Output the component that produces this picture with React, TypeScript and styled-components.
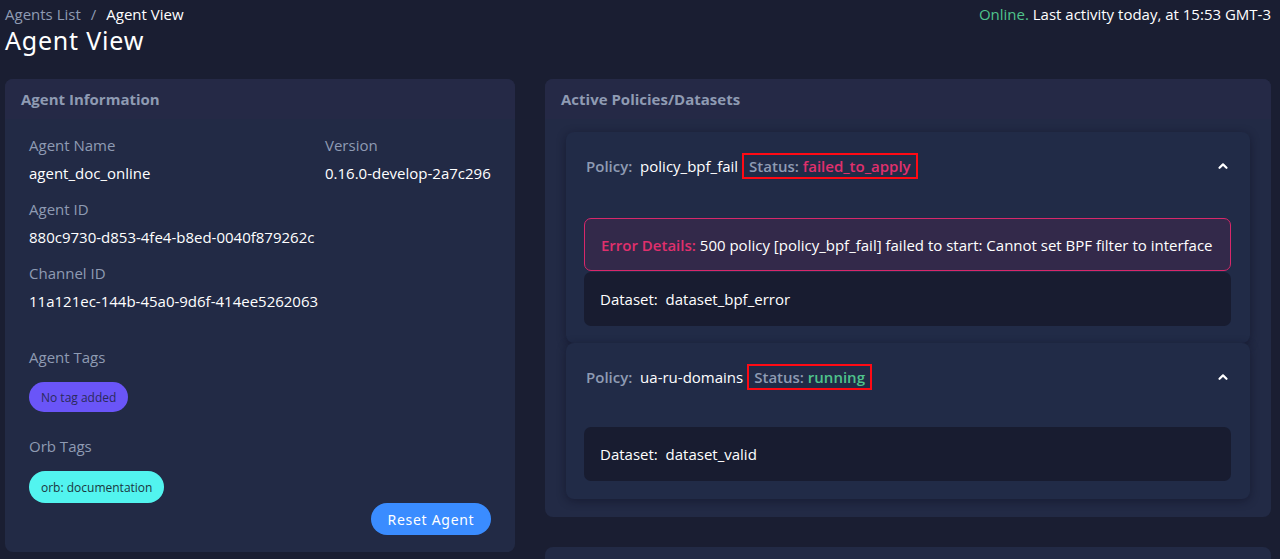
import React from "react";
import styled, { createGlobalStyle } from "styled-components";

const GlobalStyle = createGlobalStyle`
  html, body { margin: 0; padding: 0; background: #1a1e32; }
  body { font-family: "Open Sans", "Noto Sans", sans-serif; color: #ffffff; font-size: 15px; }
  * { box-sizing: border-box; }
`;

const Page = styled.div`
  height: 559px;
  padding: 5px 9px 0 5px;
  background: #1a1e32;
  overflow: hidden;
`;

const TopBar = styled.div`
  display: flex;
  justify-content: space-between;
  align-items: flex-start;
`;

const Crumbs = styled.div`
  display: flex;
  align-items: center;
  gap: 10px;
  font-size: 15px;
  line-height: 18px;
`;

const CrumbLink = styled.span`
  color: #8f9bb3;
`;

const CrumbSep = styled.span`
  color: #8f9bb3;
`;

const CrumbCurrent = styled.span`
  color: #ffffff;
`;

const Title = styled.h1`
  margin: 1px 0 0;
  font-family: "Noto Sans", sans-serif;
  font-weight: 400;
  font-size: 25px;
  line-height: 32px;
  letter-spacing: 0.8px;
  color: #ffffff;
`;

const Activity = styled.div`
  font-size: 15px;
  line-height: 18px;
  color: #ffffff;
`;

const Online = styled.span`
  color: #4fc38c;
`;

const Columns = styled.div`
  display: grid;
  grid-template-columns: 510px 726px;
  column-gap: 30px;
  margin-top: 23px;
  align-items: start;
`;

const Stack = styled.div`
  display: flex;
  flex-direction: column;
  gap: 30px;
`;

const Card = styled.section`
  background: #222a45;
  border-radius: 8px;
  overflow: hidden;
`;

const CardHeader = styled.header`
  height: 40px;
  padding: 0 16px;
  display: flex;
  align-items: center;
  background: #252946;
  color: #8f9bb3;
  font-weight: 700;
  font-size: 15px;
`;

const InfoBody = styled.div`
  padding: 16px 24px 17px;
  display: flex;
  flex-direction: column;
`;

const InfoGrid = styled.div`
  display: grid;
  grid-template-columns: 296px 1fr;
  row-gap: 16px;
`;

const Field = styled.div<{ $wide?: boolean }>`
  display: flex;
  flex-direction: column;
  gap: 8px;
  grid-column: ${(p) => (p.$wide ? "1 / span 2" : "auto")};
`;

const Label = styled.div`
  color: #8f9bb3;
  font-size: 15px;
  line-height: 20px;
`;

const Value = styled.div`
  color: #ffffff;
  font-size: 15px;
  line-height: 20px;
  white-space: nowrap;
`;

const TagSection = styled.div<{ $top: number }>`
  margin-top: ${(p) => p.$top}px;
  display: flex;
  flex-direction: column;
  align-items: flex-start;
  gap: 15px;
`;

const Pill = styled.span<{ $bg: string; $fg: string; $h: number }>`
  display: inline-flex;
  align-items: center;
  height: ${(p) => p.$h}px;
  padding: 0 12px;
  border-radius: 16px;
  background: ${(p) => p.$bg};
  color: ${(p) => p.$fg};
  font-size: 12px;
`;

const Actions = styled.div`
  display: flex;
  justify-content: flex-end;
`;

const Button = styled.button`
  height: 32px;
  width: 120px;
  border: none;
  border-radius: 16px;
  background: #3a8cff;
  color: #ffffff;
  font-family: "Noto Sans", sans-serif;
  font-size: 14px;
  letter-spacing: 0.7px;
  cursor: pointer;
`;

const PoliciesBody = styled.div`
  padding: 13px 21px 18px 21px;
  display: flex;
  flex-direction: column;
`;

const Accordion = styled.div`
  background: #212b47;
  border-radius: 8px;
  box-shadow: 0 2px 10px rgba(10, 12, 28, 0.45);
`;

const AccHeader = styled.div`
  display: flex;
  align-items: center;
  justify-content: space-between;
  padding: 21px 21px 23px 20px;
`;

const PolicyLine = styled.div`
  font-size: 15px;
  line-height: 26px;
  white-space: pre;
`;

const Muted = styled.span`
  color: #8f9bb3;
  font-weight: 600;
`;

const StatusBox = styled.span`
  margin-left: 4px;
  height: 26px;
  display: inline-flex;
  align-items: center;
  vertical-align: top;
  padding: 0 5px;
  border: 2px solid #ff0a14;
`;

const StatusValue = styled.span<{ $tone: "bad" | "good" }>`
  color: ${(p) => (p.$tone === "bad" ? "#e0306d" : "#4fc38c")};
  font-weight: 600;
`;

const Chevron = styled.svg`
  width: 12px;
  height: 12px;
  display: block;
`;

const AccBody = styled.div<{ $top: number; $bottom: number }>`
  padding: ${(p) => p.$top}px 19px ${(p) => p.$bottom}px 18px;
  display: flex;
  flex-direction: column;
  gap: 1px;
`;

const ErrorBox = styled.div`
  height: 53px;
  display: flex;
  align-items: center;
  padding: 0 16px;
  border: 1px solid #d8286a;
  border-radius: 7px;
  background: #33294a;
  color: #ffffff;
  font-size: 15px;
  white-space: nowrap;
`;

const ErrorLabel = styled.span`
  color: #e0306d;
  font-weight: 600;
`;

const DatasetBox = styled.div`
  height: 54px;
  display: flex;
  align-items: center;
  padding: 0 16px;
  border-radius: 7px;
  background: #181c30;
  color: #ffffff;
  font-size: 15px;
  white-space: pre;
`;

const StubCard = styled.section`
  height: 40px;
  background: #222a45;
  border-radius: 8px;
`;

const ChevronUp = () => (
  <Chevron viewBox="0 0 12 12">
    <path d="M2.5 7.8 L6 4.4 L9.5 7.8" fill="none" stroke="#ffffff" strokeWidth="2.2" strokeLinecap="round" strokeLinejoin="round" />
  </Chevron>
);

type PolicyProps = {
  name: string;
  status: string;
  tone: "bad" | "good";
  error?: string;
  dataset: string;
  bodyTop: number;
  bodyBottom: number;
};

const Policy = ({ name, status, tone, error, dataset, bodyTop, bodyBottom }: PolicyProps) => (
  <Accordion>
    <AccHeader>
      <PolicyLine>
        <Muted>Policy:</Muted>
        {`  ${name}`}
        <StatusBox>
          <Muted>Status: </Muted>
          <StatusValue $tone={tone}>{status}</StatusValue>
        </StatusBox>
      </PolicyLine>
      <ChevronUp />
    </AccHeader>
    <AccBody $top={bodyTop} $bottom={bodyBottom}>
      {error && (
        <ErrorBox>
          <ErrorLabel>Error Details:</ErrorLabel>&nbsp;{error}
        </ErrorBox>
      )}
      <DatasetBox>{`Dataset:  ${dataset}`}</DatasetBox>
    </AccBody>
  </Accordion>
);

export default function App() {
  return (
    <>
      <GlobalStyle />
      <Page>
        <TopBar>
          <div>
            <Crumbs>
              <CrumbLink>Agents List</CrumbLink>
              <CrumbSep>/</CrumbSep>
              <CrumbCurrent>Agent View</CrumbCurrent>
            </Crumbs>
            <Title>Agent View</Title>
          </div>
          <Activity>
            <Online>Online.</Online> Last activity today, at 15:53 GMT-3
          </Activity>
        </TopBar>
        <Columns>
          <Card>
            <CardHeader>Agent Information</CardHeader>
            <InfoBody>
              <InfoGrid>
                <Field>
                  <Label>Agent Name</Label>
                  <Value>agent_doc_online</Value>
                </Field>
                <Field>
                  <Label>Version</Label>
                  <Value>0.16.0-develop-2a7c296</Value>
                </Field>
                <Field $wide>
                  <Label>Agent ID</Label>
                  <Value>880c9730-d853-4fe4-b8ed-0040f879262c</Value>
                </Field>
                <Field $wide>
                  <Label>Channel ID</Label>
                  <Value>11a121ec-144b-45a0-9d6f-414ee5262063</Value>
                </Field>
              </InfoGrid>
              <TagSection $top={36}>
                <Label>Agent Tags</Label>
                <Pill $bg="#6a55f8" $fg="#2b2a5c" $h={30}>No tag added</Pill>
              </TagSection>
              <TagSection $top={24}>
                <Label>Orb Tags</Label>
                <Pill $bg="#52f4ef" $fg="#1c3640" $h={32}>orb: documentation</Pill>
              </TagSection>
              <Actions>
                <Button>Reset Agent</Button>
              </Actions>
            </InfoBody>
          </Card>
          <Stack>
            <Card>
              <CardHeader>Active Policies/Datasets</CardHeader>
              <PoliciesBody>
                <Policy
                  name="policy_bpf_fail"
                  status="failed_to_apply"
                  tone="bad"
                  error="500 policy [policy_bpf_fail] failed to start: Cannot set BPF filter to interface"
                  dataset="dataset_bpf_error"
                  bodyTop={16}
                  bodyBottom={17}
                />
                <Policy
                  name="ua-ru-domains"
                  status="running"
                  tone="good"
                  dataset="dataset_valid"
                  bodyTop={14}
                  bodyBottom={18}
                />
              </PoliciesBody>
            </Card>
            <StubCard />
          </Stack>
        </Columns>
      </Page>
    </>
  );
}
